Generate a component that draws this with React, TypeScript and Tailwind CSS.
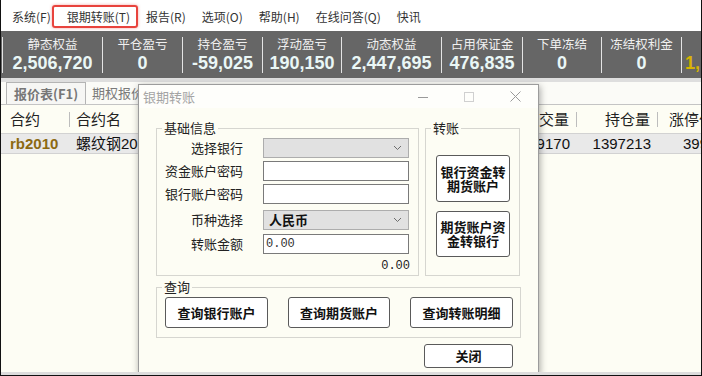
import React from 'react';

const cjk = "font-['Noto_Sans_CJK_SC','Noto_Sans',sans-serif]";

const menus = ['系统(F)', '银期转账(T)', '报告(R)', '选项(O)', '帮助(H)', '在线问答(Q)', '快讯'];

const stats = [
  { label: '静态权益', value: '2,506,720', w: 'w-[100px]' },
  { label: '平仓盈亏', value: '0', w: 'w-[80px]' },
  { label: '持仓盈亏', value: '-59,025', w: 'w-[80px]' },
  { label: '浮动盈亏', value: '190,150', w: 'w-[79px]' },
  { label: '动态权益', value: '2,447,695', w: 'w-[100px]' },
  { label: '占用保证金', value: '476,835', w: 'w-[81px]' },
  { label: '下单冻结', value: '0', w: 'w-[79px]' },
  { label: '冻结权利金', value: '0', w: 'w-[80px]' },
];

const Chevron = () => (
  <svg width="9" height="6" viewBox="0 0 9 6" className="mr-[6px]">
    <polyline points="1,1 4.5,4.5 8,1" fill="none" stroke="#6d6d6d" strokeWidth="1" />
  </svg>
);

const Btn: React.FC<{ className: string; children: React.ReactNode }> = ({ className, children }) => (
  <button className={`bg-white border border-[#5a5a5a] rounded-[3px] font-bold text-[13px] text-[#111] flex flex-col items-center justify-center leading-[14px] ${className}`}>
    {children}
  </button>
);

function MenuBar() {
  return (
    <div className="relative h-[31px] bg-white flex items-center pl-[3px]">
      {menus.map((m) => (
        <span key={m} className="px-[8px] text-[12px] leading-[16px] text-[#333] mt-[2px]">
          {m}
        </span>
      ))}
      {/* highlight around the active menu */}
      <div className="absolute left-[51px] top-[5px] w-[86px] h-[23px] border-2 border-[#e8433d] rounded-[3px] shadow-[0_0_3px_rgba(232,67,61,0.5)]" />
    </div>
  );
}

function StatsBar() {
  return (
    <div className="flex h-[47px] bg-[#666666] pl-[1px] overflow-hidden">
      {stats.map((s) => (
        <div key={s.label} className={`${s.w} shrink-0 flex items-center`}>
          <div className="w-px h-[36px] bg-[#e4e4e4]" />
          <div className="flex-1 flex flex-col items-center">
            <span className="text-[12.5px] leading-[16px] text-[#f0f0f0]">{s.label}</span>
            <span className="text-[18px] leading-[22px] font-bold text-[#eaf7f6] font-['Liberation_Sans',sans-serif]">
              {s.value}
            </span>
          </div>
        </div>
      ))}
      <div className="flex items-center shrink-0">
        <div className="w-px h-[36px] bg-[#e4e4e4]" />
        <span className="ml-[3px] mt-[16px] text-[18px] leading-[22px] font-bold text-[#d6b400] font-['Liberation_Sans',sans-serif]">
          1,
        </span>
      </div>
    </div>
  );
}

function Quotes() {
  return (
    <div className="flex flex-col">
      <div className="h-[4px] bg-[#dedede]" />
      <div className="h-[23px] flex items-end border-b border-[#c4c4c4] bg-[#fbfbf7] pl-[5px]">
        <div className="h-[22px] px-[7px] flex items-center border border-b-0 border-[#b4b4b4] bg-[#f6f6f4] text-[13px] font-bold text-[#777]">
          报价表(F1)
        </div>
        <div className="h-[22px] px-[6px] flex items-center text-[13px] text-[#7a7a7a]">期权报价表</div>
      </div>
      <div className="h-[28px] flex items-center text-[15px] text-[#222] leading-[18px]">
        <div className="w-[69px] shrink-0 flex items-center justify-between pl-[9px]">
          <span>合约</span>
          <div className="w-px h-[15px] bg-[#bdbdbd]" />
        </div>
        <div className="w-[507px] shrink-0 flex items-center justify-between pl-[6px]">
          <span>合约名</span>
          <div className="flex items-center gap-[7px]">
            <span>成交量</span>
            <div className="w-px h-[15px] bg-[#bdbdbd]" />
          </div>
        </div>
        <div className="w-[81px] shrink-0 flex items-center justify-end gap-[7px]">
          <span>持仓量</span>
          <div className="w-px h-[15px] bg-[#bdbdbd]" />
        </div>
        <span className="pl-[11px] whitespace-nowrap">涨停价</span>
      </div>
      <div className="h-[21px] flex items-center bg-[#e9e9e9] border-y border-[#d2d2d2] text-[15px] leading-[18px] font-['Liberation_Sans','Noto_Sans_CJK_SC',sans-serif]">
        <span className="w-[69px] shrink-0 pl-[9px] font-bold text-[#8c6a12]">rb2010</span>
        <div className="w-[507px] shrink-0 flex items-center justify-between pl-[6px] pr-[7px] text-[#111]">
          <span>螺纹钢2010</span>
          <span>39170</span>
        </div>
        <span className="w-[81px] shrink-0 text-right pr-[7px] text-[#111]">1397213</span>
        <span className="pl-[25px] text-[#111]">3990</span>
      </div>
    </div>
  );
}

function FormRow({ label, children, className }: { label: string; children: React.ReactNode; className: string }) {
  return (
    <div className={`flex items-center ${className}`}>
      <span className="w-[86px] text-right text-[13px] leading-[16px] text-[#222]">{label}</span>
      <div className="ml-[20px]">{children}</div>
    </div>
  );
}

const Input = ({ children }: { children?: React.ReactNode }) => (
  <div className="w-[146px] h-[20px] border border-[#7a7a7a] bg-white flex items-center pl-[2px]">{children}</div>
);

const Select = ({ children }: { children?: React.ReactNode }) => (
  <div className="w-[146px] h-[20px] border border-[#adadad] bg-[#e1e1e1] flex items-center justify-between pl-[5px]">
    <span className="text-[13px] font-bold text-[#111] leading-[16px]">{children}</span>
    <Chevron />
  </div>
);

function GroupLabel({ text }: { text: string }) {
  return (
    <span className="-mt-[9px] ml-[5px] px-[2px] w-fit bg-[#fdfdf4] text-[13px] leading-[16px] text-[#222]">{text}</span>
  );
}

function TransferDialog() {
  return (
    <div className={`absolute left-[137px] top-[84px] w-[401px] h-[290px] flex flex-col bg-[#fdfdf4] border border-[#9c9c9c] shadow-[1px_2px_7px_rgba(0,0,0,0.35)] ${cjk}`}>
      <div className="h-[23px] flex items-center bg-[#fefefb]">
        <span className="pl-[4px] text-[13px] leading-[16px] text-[#a4a4a4]">银期转账</span>
        <div className="ml-auto flex h-full">
          <div className="w-[46px] flex items-center justify-center">
            <svg width="10" height="10" viewBox="0 0 10 10">
              <line x1="0" y1="5.5" x2="10" y2="5.5" stroke="#9a9a9a" strokeWidth="1" />
            </svg>
          </div>
          <div className="w-[46px] flex items-center justify-center">
            <svg width="10" height="10" viewBox="0 0 10 10">
              <rect x="0.5" y="0.5" width="9" height="9" fill="none" stroke="#d0d0d0" strokeWidth="1" />
            </svg>
          </div>
          <div className="w-[46px] flex items-center justify-center">
            <svg width="11" height="11" viewBox="0 0 11 11">
              <path d="M0.5 0.5 L10.5 10.5 M10.5 0.5 L0.5 10.5" stroke="#9a9a9a" strokeWidth="1" />
            </svg>
          </div>
        </div>
      </div>

      <div className="flex flex-col pl-[17px]">
        <div className="flex gap-[6px] mt-[20px]">
          <div className="w-[263px] h-[148px] border border-[#d6d6d0] flex flex-col">
            <GroupLabel text="基础信息" />
            <FormRow label="选择银行" className="mt-[2px]">
              <Select />
            </FormRow>
            <FormRow label="资金账户密码" className="mt-[3px]">
              <Input />
            </FormRow>
            <FormRow label="银行账户密码" className="mt-[3px]">
              <Input />
            </FormRow>
            <FormRow label="币种选择" className="mt-[6px]">
              <Select>人民币</Select>
            </FormRow>
            <FormRow label="转账金额" className="mt-[4px]">
              <Input>
                <span className="text-[12px] leading-[14px] font-['Liberation_Mono',monospace] text-[#333]">0.00</span>
              </Input>
            </FormRow>
            <div className="flex justify-end pr-[8px] mt-[5px]">
              <span className="text-[12px] leading-[14px] font-['Liberation_Mono',monospace] text-[#222]">0.00</span>
            </div>
          </div>

          <div className="w-[95px] h-[148px] border border-[#d6d6d0] flex flex-col">
            <GroupLabel text="转账" />
            <Btn className="ml-[10px] mt-[19px] w-[74px] h-[47px]">
              <span>银行资金转</span>
              <span>期货账户</span>
            </Btn>
            <Btn className="ml-[10px] mt-[9px] w-[74px] h-[46px]">
              <span>期货账户资</span>
              <span>金转银行</span>
            </Btn>
          </div>
        </div>

        <div className="mt-[11px] w-[365px] h-[51px] border border-[#d6d6d0] flex flex-col">
          <GroupLabel text="查询" />
          <div className="flex gap-[20px] ml-[8px] mt-[2px]">
            <Btn className="w-[103px] h-[31px]">查询银行账户</Btn>
            <Btn className="w-[102px] h-[31px]">查询期货账户</Btn>
            <Btn className="w-[103px] h-[31px]">查询转账明细</Btn>
          </div>
        </div>

        <div className="flex justify-end pr-[25px] mt-[6px]">
          <Btn className="w-[89px] h-[24px]">关闭</Btn>
        </div>
      </div>
    </div>
  );
}

export default function App() {
  return (
    <div className={`relative w-[702px] h-[376px] overflow-hidden bg-[#fdfdf4] border-x border-b border-[#111] ${cjk}`}>
      <MenuBar />
      <StatsBar />
      <Quotes />
      <TransferDialog />
      <div className="absolute left-0 right-0 bottom-0 h-[3px] bg-[#dcdcdc]" />
    </div>
  );
}
